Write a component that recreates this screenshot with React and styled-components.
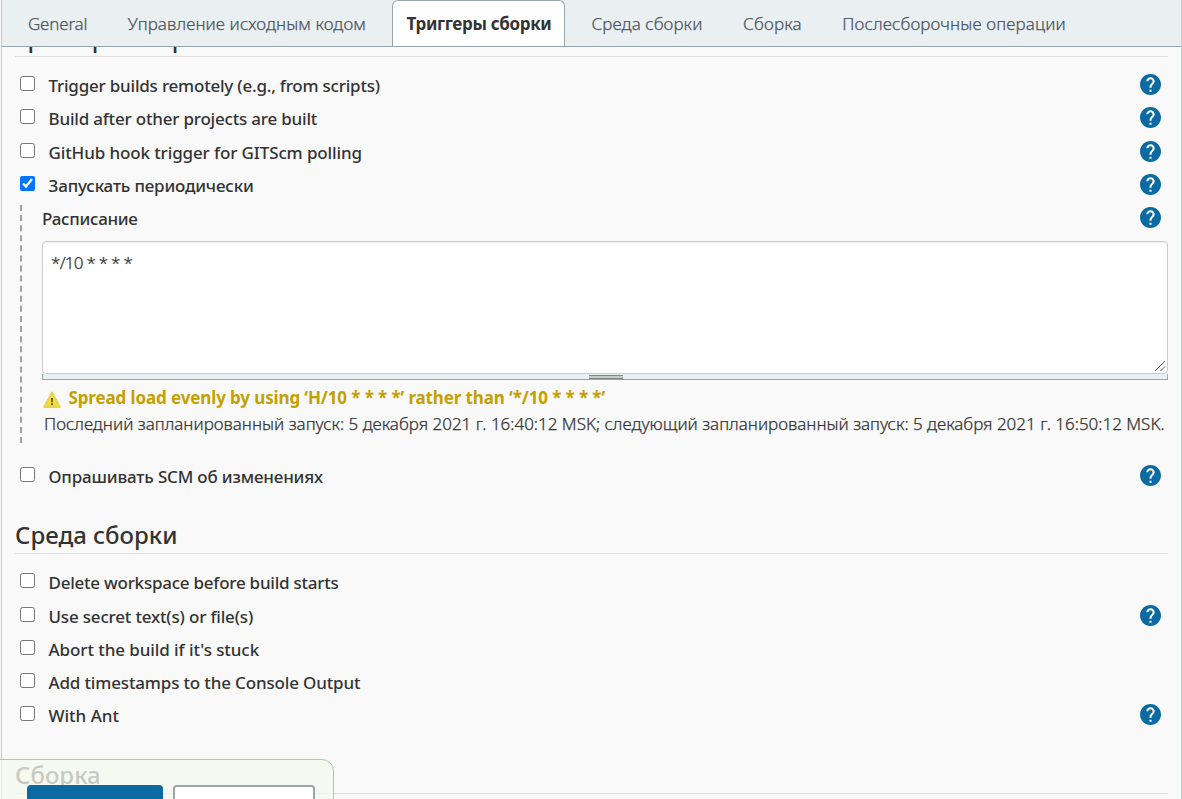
import React from "react";
import styled, { createGlobalStyle, css } from "styled-components";

const GlobalStyle = createGlobalStyle`
  *, *::before, *::after { box-sizing: border-box; }
  body {
    margin: 0;
    overflow: hidden;
    background: #f9f9f9;
    color: #333;
    font-family: "Noto Sans", "Open Sans", sans-serif;
    font-size: 17px;
    line-height: 24px;
  }
`;

const lightText = css`
  font-weight: 300;
  -webkit-text-stroke: 0.25px currentColor;
`;

const Page = styled.div`
  position: relative;
  height: 799px;
  padding-left: 1px;
  overflow: hidden;
`;

const Panel = styled.div`
  height: 100%;
  display: flex;
  flex-direction: column;
  border: 1px solid #c5cacc;
  border-width: 0 1px;
`;

const TabBar = styled.nav`
  flex: none;
  height: 47px;
  display: flex;
  gap: 12.5px;
  padding-left: 12px;
  background: #eaeff2;
  border-bottom: 1px solid #98a6ad;
`;

const Tab = styled.a`
  height: 46px;
  padding: 11px 13px 0;
  border: 1px solid transparent;
  border-bottom: 0;
  border-radius: 6px 6px 0 0;
  color: #4d545d;
  ${lightText}
  white-space: nowrap;
  letter-spacing: ${(p) => p.$track}px;
  ${(p) =>
    p.$active &&
    css`
      padding-right: 12.5px;
      background: #fff;
      border-color: #98a6ad;
      color: #333;
      font-weight: 700;
      -webkit-text-stroke: 0;
    `}
`;

const Scroll = styled.main`
  flex: 1;
  min-height: 0;
  overflow: hidden;
  padding: 0 13px;
`;

const Section = styled.section`
  margin-top: ${(p) => p.$top}px;
`;

const SectionTitle = styled.h2`
  margin: 0 0 12.1px;
  height: 37px;
  border-bottom: 1px solid #dedede;
  font-size: 24px;
  font-weight: 500;
  line-height: 36px;
  letter-spacing: ${(p) => p.$track || 0}px;
`;

const Row = styled.div`
  height: 33.25px;
  display: flex;
  align-items: flex-start;
  padding: 0 7px 0 5px;
`;

const Check = styled.input`
  width: 15px;
  height: 15px;
  margin: 7px 13.5px 0 0;
`;

const Label = styled.label`
  flex: 1;
  padding-top: 5px;
  font-weight: 500;
  white-space: nowrap;
  letter-spacing: ${(p) => p.$track}px;
`;

const HelpButton = styled.svg`
  flex: none;
  width: 21px;
  height: 21px;
  margin-top: 5px;
  fill: #0b6aa2;
`;

const Nested = styled.div`
  height: 238px;
  margin: 3px 0 17.2px 5px;
  padding-left: 20px;
  border-left: 2px dashed #a0a0a0;
`;

const NestedHead = styled.div`
  height: 36px;
  display: flex;
  padding-right: 7px;
`;

const NestedLabel = styled(Label)`
  padding-top: 2px;
`;

const NestedHelp = styled(HelpButton)`
  margin-top: 2px;
`;

const ScheduleBox = styled.div`
  position: relative;
`;

const Schedule = styled.textarea`
  display: block;
  width: 100%;
  height: 133px;
  padding: 9px 8px 8px;
  border: 1px solid #ccc;
  border-radius: 4px;
  outline: 0;
  background: #fff;
  box-shadow: inset 0 1px 1px rgba(0, 0, 0, 0.075);
  color: #333;
  font: 17px/24px "Noto Sans", sans-serif;
  ${lightText}
  letter-spacing: -0.73px;
  resize: none;
`;

const ResizeCorner = styled.svg`
  position: absolute;
  right: 2px;
  bottom: 2px;
  width: 12px;
  height: 12px;
  stroke: #555;
`;

const Handle = styled.div`
  height: 6px;
  display: flex;
  justify-content: center;
  padding-left: 2px;
  background: #eaeff2;
  border: 1px solid #98a6ad;
  border-top: 0;
`;

const Grip = styled.i`
  width: 34px;
  height: 4px;
  margin-top: 1px;
  border: 1px solid #7d8783;
  border-width: 1px 0;
  background: #c5cbc9;
`;

const Warning = styled.div`
  display: flex;
  height: 26px;
  margin-top: 6px;
  color: #c4a000;
  font-weight: 700;
  white-space: nowrap;
  letter-spacing: -0.12px;
  svg { flex: none; width: 20px; height: 20px; margin: 3.5px 6.5px 0 0; }
`;

const NextRun = styled.div`
  padding-left: 2px;
  ${lightText}
  white-space: nowrap;
`;

const SaveBar = styled.footer`
  position: absolute;
  left: -1px;
  bottom: -30px;
  width: 335px;
  height: 70px;
  display: flex;
  gap: 10px;
  padding: 25px 0 0 27px;
  border: 1px solid #a3cbb5;
  border-radius: 0 12px 0 0;
  background: rgba(245, 248, 235, 0.77);
`;

const BarButton = styled.button`
  width: ${(p) => p.$width}px;
  height: 40px;
  border: 2px solid ${(p) => (p.$primary ? "#0b6aa2" : "#98a6ad")};
  border-radius: 4px;
  background: ${(p) => (p.$primary ? "#0b6aa2" : "#fff")};
`;

const helpPath =
  "M12 2C6.48 2 2 6.48 2 12s4.48 10 10 10 10-4.48 10-10S17.52 2 12 2zm1 17h-2v-2h2v2zm2.07-7.75l-.9.92C13.45 12.9 13 13.5 13 15h-2v-.5c0-1.1.45-2.1 1.17-2.83l1.24-1.26c.37-.36.59-.86.59-1.41 0-1.1-.9-2-2-2s-2 .9-2 2H8c0-2.21 1.79-4 4-4s4 1.79 4 4c0 .88-.36 1.68-.93 2.25z";

function Help({ as: Icon = HelpButton }) {
  return (
    <Icon viewBox="2 2 20 20">
      <circle cx="12" cy="12" r="9" fill="#fff" />
      <path d={helpPath} />
    </Icon>
  );
}

function WarningIcon() {
  return (
    <svg viewBox="0 0 20 20">
      <defs>
        <linearGradient id="warn" x1="0" y1="0" x2="0" y2="1">
          <stop offset="0" stopColor="#f7ea6c" />
          <stop offset="1" stopColor="#f0d92a" />
        </linearGradient>
      </defs>
      <path d="M10 2.6 17.8 17H2.2Z" fill="url(#warn)" stroke="#e6d34c" strokeWidth="2" strokeLinejoin="round" />
      <path d="M9 8h2l-.3 4.2H9.3ZM9.1 13.2h1.8V15H9.1Z" fill="#55501c" />
    </svg>
  );
}

const tabs = [
  { text: "General", track: -0.2 },
  { text: "Управление исходным кодом", track: 0.09 },
  { text: "Триггеры сборки", track: -0.33, active: true },
  { text: "Среда сборки", track: 0.08 },
  { text: "Сборка", track: 0.2 },
  { text: "Послесборочные операции", track: 0.14 },
];

const triggers = [
  { text: "Trigger builds remotely (e.g., from scripts)", track: -0.21, help: true },
  { text: "Build after other projects are built", track: -0.2, help: true },
  { text: "GitHub hook trigger for GITScm polling", track: -0.12, help: true },
  { text: "Запускать периодически", track: -0.18, help: true, checked: true },
];

const environment = [
  { text: "Delete workspace before build starts", track: -0.24 },
  { text: "Use secret text(s) or file(s)", track: -0.18, help: true },
  { text: "Abort the build if it's stuck", track: -0.08 },
  { text: "Add timestamps to the Console Output", track: -0.16 },
  { text: "With Ant", track: 0, help: true },
];

function Option({ text, track, help, checked }) {
  return (
    <Row>
      <Check type="checkbox" defaultChecked={checked} />
      <Label $track={track}>{text}</Label>
      {help && <Help />}
    </Row>
  );
}

export default function App() {
  return (
    <Page>
      <GlobalStyle />
      <Panel>
        <TabBar>
          {tabs.map((t) => (
            <Tab key={t.text} $track={t.track} $active={t.active}>{t.text}</Tab>
          ))}
        </TabBar>
        <Scroll>
          <Section $top={-27}>
            <SectionTitle $track={-0.15}>Триггеры сборки</SectionTitle>
            {triggers.map((t) => <Option key={t.text} {...t} />)}
            <Nested>
              <NestedHead>
                <NestedLabel $track={-0.31}>Расписание</NestedLabel>
                <Help as={NestedHelp} />
              </NestedHead>
              <ScheduleBox>
                <Schedule defaultValue="*/10 * * * *" spellCheck={false} />
                <ResizeCorner viewBox="0 0 12 12">
                  <path d="M1 11 11 1M6.5 11 11 6.5" />
                </ResizeCorner>
              </ScheduleBox>
              <Handle><Grip /></Handle>
              <Warning>
                <WarningIcon />
                Spread load evenly by using ‘H/10 * * * *’ rather than ‘*/10 * * * *’
              </Warning>
              <NextRun>
                Последний запланированный запуск: 5 декабря 2021 г. 16:40:12 MSK; следующий запланированный запуск: 5 декабря 2021 г. 16:50:12 MSK.
              </NextRun>
            </Nested>
            <Option text="Опрашивать SCM об изменениях" track={-0.17} help />
          </Section>
          <Section $top={23.65}>
            <SectionTitle>Среда сборки</SectionTitle>
            {environment.map((t) => <Option key={t.text} {...t} />)}
          </Section>
          <Section $top={24.65}>
            <SectionTitle>Сборка</SectionTitle>
          </Section>
        </Scroll>
      </Panel>
      <SaveBar>
        <BarButton $primary $width={136} aria-label="Сохранить" />
        <BarButton $width={142} aria-label="Применить" />
      </SaveBar>
    </Page>
  );
}
